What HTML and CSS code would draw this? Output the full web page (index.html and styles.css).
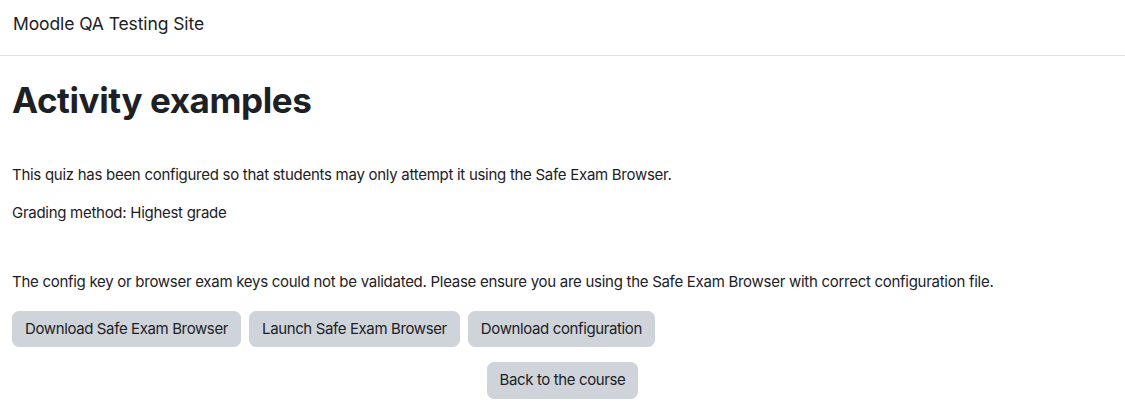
FILE: index.html
```html
<!DOCTYPE html>
<html lang="en">
<head>
<meta charset="utf-8">
<title>Activity examples</title>
<link rel="stylesheet" href="styles.css">
</head>
<body>
<header class="navbar">
  <span class="brand">Moodle QA Testing Site</span>
</header>
<main class="page">
  <h1 class="page-title">Activity examples</h1>
  <div class="quizinfo">
    <p>This quiz has been configured so that students may only attempt it using the Safe Exam Browser.</p>
    <p>Grading method: Highest grade</p>
  </div>
  <div class="seb">
    <p>The config key or browser exam keys could not be validated. Please ensure you are using the Safe Exam Browser with correct configuration file.</p>
    <div class="btn-row">
      <button class="btn">Download Safe Exam Browser</button>
      <button class="btn">Launch Safe Exam Browser</button>
      <button class="btn">Download configuration</button>
    </div>
  </div>
  <div class="continue">
    <button class="btn">Back to the course</button>
  </div>
</main>
</body>
</html>
```
FILE: styles.css
```css
* { box-sizing: border-box; }
html, body { margin: 0; padding: 0; }
body {
  font-family: Inter, "Noto Sans", sans-serif;
  font-size: 15px;
  line-height: 1.5;
  letter-spacing: -0.28px;
  color: #1d2125;
  background: #fff;
}
.navbar {
  height: 56px;
  border-bottom: 1px solid #dee2e6;
  display: flex;
  align-items: center;
  padding: 0 13px 6px;
}
.brand {
  font-size: 17.5px;
  letter-spacing: -0.1px;
  color: #1d2125;
}
.page {
  padding: 0 12px;
}
.page-title {
  font-size: 35px;
  font-weight: 700;
  line-height: 1.2;
  letter-spacing: -0.4px;
  margin: 23px 0 43px;
}
.quizinfo p, .seb p {
  margin: 0 0 15px;
}
.seb p {
  margin-bottom: 17px;
}
.quizinfo {
  margin-bottom: 47px;
}
.btn-row {
  display: flex;
  gap: 8px;
}
.btn {
  font: inherit;
  letter-spacing: -0.38px;
  color: #1d2125;
  background: #ced4da;
  border: 1px solid #ced4da;
  border-radius: 7px;
  padding: 6px 12px;
  line-height: 1.5;
}
.continue {
  display: flex;
  justify-content: center;
  margin-top: 15px;
}
```
